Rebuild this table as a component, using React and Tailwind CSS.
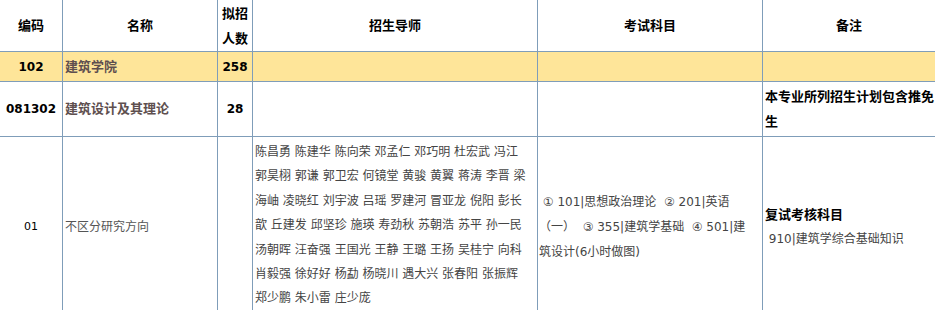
const teachers = [
  '陈昌勇 陈建华 陈向荣 邓孟仁 邓巧明 杜宏武 冯江',
  '郭昊栩 郭谦 郭卫宏 何镜堂 黄骏 黄翼 蒋涛 李晋 梁',
  '海岫 凌晓红 刘宇波 吕瑶 罗建河 冒亚龙 倪阳 彭长',
  '歆 丘建发 邱坚珍 施瑛 寿劲秋 苏朝浩 苏平 孙一民',
  '汤朝晖 汪奋强 王国光 王静 王璐 王扬 吴桂宁 向科',
  '肖毅强 徐好好 杨勐 杨晓川 遇大兴 张春阳 张振辉',
  '郑少鹏 朱小雷 庄少庞',
];

const exam = [
  ' ① 101|思想政治理论  ② 201|英语',
  '（一）  ③ 355|建筑学基础  ④ 501|建',
  '筑设计(6小时做图)',
];

const Cell = ({ className = '', children }) => (
  <div className={`border-b border-r border-[#7f9db9] flex items-center ${className}`}>
    {children}
  </div>
);

const App = () => {
  return (
    <div className="w-[935px] h-[310px] overflow-hidden bg-white font-['DejaVu_Sans','Noto_Sans_CJK_SC',sans-serif]">
      <div className="grid grid-cols-[63px_155px_35px_285px_225px_172px]">
        {/* header */}
        <Cell className="h-[52px] justify-center text-[13px] font-bold text-black">编码</Cell>
        <Cell className="h-[52px] justify-center text-[13px] font-bold text-black">名称</Cell>
        <Cell className="h-[52px] justify-center text-[13px] font-bold text-black leading-[25px] text-center">
          <div>拟招<br />人数</div>
        </Cell>
        <Cell className="h-[52px] justify-center text-[13px] font-bold text-black">招生导师</Cell>
        <Cell className="h-[52px] justify-center text-[13px] font-bold text-black">考试科目</Cell>
        <Cell className="h-[52px] justify-center text-[13px] font-bold text-black border-r-0">备注</Cell>

        {/* school */}
        <Cell className="h-[30px] justify-center bg-[#fee599] text-[12px] font-bold text-black">102</Cell>
        <Cell className="h-[30px] bg-[#fee599] pl-[2px] text-[13px] font-bold text-[#5e4f4f]">建筑学院</Cell>
        <Cell className="h-[30px] justify-center bg-[#fee599] text-[12px] font-bold text-black">258</Cell>
        <Cell className="h-[30px] bg-[#fee599]" />
        <Cell className="h-[30px] bg-[#fee599]" />
        <Cell className="h-[30px] bg-[#fee599] border-r-0" />

        {/* major */}
        <Cell className="h-[55px] justify-center text-[12px] font-bold text-black">081302</Cell>
        <Cell className="h-[55px] pl-[2px] text-[13px] font-bold text-[#5e4f4f]">建筑设计及其理论</Cell>
        <Cell className="h-[55px] justify-center text-[12px] font-bold text-black">28</Cell>
        <Cell className="h-[55px]" />
        <Cell className="h-[55px]" />
        <Cell className="h-[55px] border-r-0 pl-[2px] text-[13px] font-bold text-black leading-[25px]">
          <div>本专业所列招生计划包含推免<br />生</div>
        </Cell>

        {/* direction */}
        <Cell className="h-[181px] justify-center text-[11px] text-black">01</Cell>
        <Cell className="h-[181px] pl-[2px] text-[12px] text-[#555]">不区分研究方向</Cell>
        <Cell className="h-[181px]" />
        <Cell className="h-[181px] items-start pt-[3px] pl-[2px] text-[12px] text-[#444] leading-[24.4px]">
          <div>
            {teachers.map((line) => (
              <div key={line} className="whitespace-pre">{line}</div>
            ))}
          </div>
        </Cell>
        <Cell className="h-[181px] pl-[1px] text-[12px] text-[#444] leading-[25px]">
          <div>
            {exam.map((line) => (
              <div key={line} className="whitespace-pre">{line}</div>
            ))}
          </div>
        </Cell>
        <Cell className="h-[181px] border-r-0 pl-[2px] leading-[24px]">
          <div>
            <div className="text-[13px] font-bold text-black">复试考核科目</div>
            <div className="whitespace-pre text-[12px] text-[#444]"> 910|建筑学综合基础知识</div>
          </div>
        </Cell>
      </div>
    </div>
  );
};

export default App;
